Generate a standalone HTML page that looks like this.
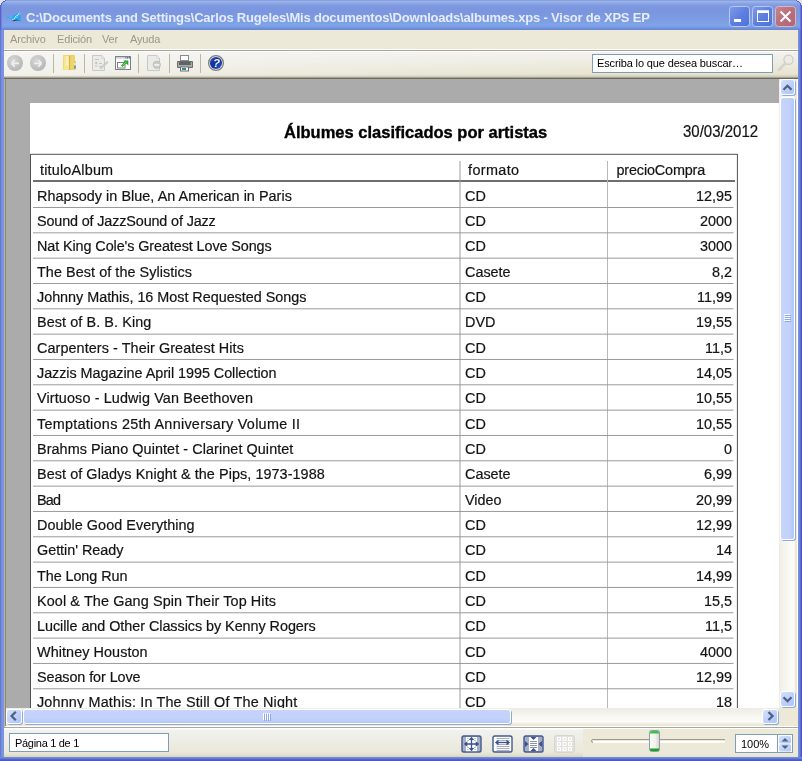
<!DOCTYPE html>
<html><head><meta charset="utf-8">
<style>
*{box-sizing:border-box}
html,body{margin:0;padding:0}
body{width:802px;height:761px;overflow:hidden;position:relative;background:#E4E4DC;font-family:"Liberation Sans",sans-serif}
.abs{position:absolute}
#win{position:absolute;left:0;top:0;width:802px;height:761px;overflow:hidden;background:#7A96DF;will-change:transform}
#title{position:absolute;left:0;top:0;width:802px;height:30px;
 background:linear-gradient(to bottom,#6C8BD8 0px,#9DB6EB 1px,#98B1E9 2px,#86A0E2 4px,#7C97DF 7px,#7A96DF 12px,#7C9CE3 20px,#80A5E7 25px,#789CE3 27px,#6D8AD8 29px,#6785D5 30px)}
#ttext{position:absolute;left:26px;top:9.5px;font-weight:bold;font-size:13px;letter-spacing:-0.2px;color:#E6ECFA;white-space:nowrap}
#lb{position:absolute;left:0;top:30px;width:4px;height:731px;background:linear-gradient(to right,#5A6ECB,#6E87DB 1px,#7A92E0 2px,#7C95E2 4px)}
#rb{position:absolute;left:798px;top:30px;width:4px;height:731px;background:linear-gradient(to right,#7490E0 0,#7490E0 1px,#6C84DA 1px,#6C84DA 2px,#5E6ECF 2px,#5E6ECF 3px,#4A50B5 3px)}
#bb{position:absolute;left:0;top:757px;width:802px;height:4px;background:linear-gradient(to bottom,#7591E1,#6B86DA 1px,#5A70CE 2px,#4A5BBB 3px)}
#menu{position:absolute;left:4px;top:30px;width:794px;height:19px;background:#ECE9D8}
.mi{position:absolute;top:3px;font-size:11px;color:#9C9887;white-space:nowrap;letter-spacing:-0.15px}
#mline{position:absolute;left:4px;top:49px;width:794px;height:3px;background:linear-gradient(to bottom,#fff 0,#fff 1px,#A8A595 1px,#A8A595 2px,#fff 2px)}
#tb{position:absolute;left:4px;top:52px;width:794px;height:27px;
 background:linear-gradient(to bottom,rgba(255,255,255,0),rgba(255,255,255,0) 100%) 0 0/100% 100% no-repeat,linear-gradient(to right,rgba(246,246,244,0.75),rgba(246,246,244,0) 75%) 0 0/100% 24px no-repeat,
 linear-gradient(to bottom,#F2F2F0 0,#EFEEE6 8px,#EBE8D8 16px,#E7E4D2 22px,#E2DECA 23px,#E2DECA 23.01px,#D2CEBA 24px,#D2CEBA 25px,#A6A394 25px,#A6A394 26px,#6B6A60 26px,#6B6A60 27px)}
.sep{position:absolute;top:54px;width:1px;height:19px;background:#BDB79E}
#doc{position:absolute;left:5px;top:79px;width:774px;height:629px;background:#ABABAB;overflow:hidden;border-left:1px solid #8A887C}
#page{position:absolute;left:24px;top:24px;width:749px;height:700px;background:#fff}
.t{position:absolute;font-size:14.4px;line-height:14.4px;color:#141414;white-space:nowrap;transform:scaleY(1.06);-webkit-text-stroke:0.2px #141414;transform-origin:0 12.2px}
.r{text-align:right}
#vs{position:absolute;left:779px;top:79px;width:19px;height:629px;background:linear-gradient(to right,#EDECE4 0,#F2F1EB 3px,#F7F7F2 8px,#FCFCF8 14px,#F6F5EE 15.5px,#ECEADB 16px,#ECEADB 18px,#fff 18px)}
#hs{position:absolute;left:5px;top:708px;width:774px;height:19px;background:linear-gradient(to bottom,#EEEDE6 0,#F1F0EA 4px,#F8F8F4 9px,#FBFBF8 14px,#F0EEE2 15.5px,#ECE9DA 16px,#ECE9DA 18px,#fff 18px,#fff 19px)}
#corner{position:absolute;left:779px;top:708px;width:19px;height:19px;background:linear-gradient(to bottom,#ECE9D8 0,#ECE9D8 18px,#fff 18px)}
.sbtn{position:absolute;border:1px solid #fff;border-radius:3px;background:linear-gradient(135deg,#D4E0FC,#B8CCF9 70%,#AEC4F7);box-shadow:1px 1px 0 #8EA8D8}
#status{position:absolute;left:4px;top:727px;width:794px;height:30px;background:linear-gradient(to bottom,#ACA899 0,#ACA899 1px,#fff 1px,#fff 2px,#F1F1EE 3px,#EEEDE5 14px,#EAE8DA 25px,#E2DFCB 28px,#D6D2BC 30px)}
.box{position:absolute;background:#fff;border:1px solid #7F9DB9}
.st{position:absolute;font-size:11px;color:#000;white-space:nowrap}
</style></head><body>
<div id="win">
 <div id="title">
  <svg class="abs" style="left:5px;top:9px" width="18" height="14" viewBox="0 0 18 14">
   <path d="M1.7 8.4 L9 6.2 L15 3.6 L16.2 12.4 L11.5 10.9 L7.4 11.6 L5.6 9.8 Z" fill="#26A8EA"/>
   <path d="M3.5 8.3 L9 6.5 L6 9.5 Z" fill="#4CB8F0"/>
   <path d="M7.6 11.2 L15 3.8" stroke="#D4F0FF" stroke-width="1.6" stroke-dasharray="1.1 0.9"/>
   <path d="M7.2 11.6 L11.5 10.6 L14.8 11.6 L11.5 11.4 L8 12.3 Z" fill="#2A3570"/>
  </svg>
  <div id="ttext">C:\Documents and Settings\Carlos Rugeles\Mis documentos\Downloads\albumes.xps - Visor de XPS EP</div>
  <!-- buttons -->
  <svg class="abs" style="left:729px;top:6px" width="68" height="22" viewBox="0 0 68 22">
   <defs>
    <linearGradient id="gb" x1="0" y1="0" x2="1" y2="1"><stop offset="0" stop-color="#7F9BEA"/><stop offset="0.5" stop-color="#5D7FE0"/><stop offset="1" stop-color="#4F72DA"/></linearGradient>
    <linearGradient id="gr" x1="0" y1="0" x2="1" y2="1"><stop offset="0" stop-color="#C58590"/><stop offset="0.5" stop-color="#BB6E7B"/><stop offset="1" stop-color="#B06674"/></linearGradient>
   </defs>
   <rect x="0.5" y="0.5" width="20" height="20" rx="3" fill="url(#gb)" stroke="#B8C8F0"/>
   <rect x="5" y="13" width="7" height="3" fill="#fff"/>
   <rect x="23.5" y="0.5" width="20" height="20" rx="3" fill="url(#gb)" stroke="#B8C8F0"/>
   <rect x="28.5" y="5" width="11" height="10.5" fill="none" stroke="#fff" stroke-width="1"/>
   <rect x="28" y="4.5" width="12" height="2.5" fill="#fff"/>
   <rect x="46.5" y="0.5" width="20" height="20" rx="3" fill="url(#gr)" stroke="#D8B8C0"/>
   <path d="M51.5 5.5 L61.5 15.5 M61.5 5.5 L51.5 15.5" stroke="#fff" stroke-width="2"/>
  </svg>
 </div>

 <svg class="abs" style="left:0;top:0" width="802" height="30" viewBox="0 0 802 30" shape-rendering="crispEdges">
  <rect x="0" y="5" width="1" height="25" fill="#5862D0"/>
  <rect x="1" y="5" width="1" height="25" fill="#7480DC"/>
  <rect x="801" y="5" width="1" height="25" fill="#5058C4"/>
  <rect x="800" y="5" width="1" height="25" fill="#6A74D4"/>
  <g fill="#E4E4DC">
   <rect x="0" y="0" width="5" height="1"/><rect x="0" y="1" width="3" height="1"/><rect x="0" y="2" width="2" height="1"/><rect x="0" y="3" width="1" height="2"/>
   <rect x="797" y="0" width="5" height="1"/><rect x="799" y="1" width="3" height="1"/><rect x="800" y="2" width="2" height="1"/><rect x="801" y="3" width="1" height="2"/>
  </g>
  <g fill="#4662D6">
   <rect x="5" y="0" width="1" height="1"/><rect x="3" y="1" width="2" height="1"/><rect x="2" y="2" width="1" height="1"/><rect x="1" y="3" width="1" height="2"/><rect x="0" y="5" width="1" height="1"/>
   <rect x="796" y="0" width="1" height="1"/><rect x="797" y="1" width="2" height="1"/><rect x="799" y="2" width="1" height="1"/><rect x="800" y="3" width="1" height="2"/><rect x="801" y="5" width="1" height="1"/>
  </g>
 </svg>
 <div id="lb"></div><div id="rb"></div><div id="bb"></div>
 <div id="menu">
  <div class="mi" style="left:6px">Archivo</div>
  <div class="mi" style="left:53px">Edición</div>
  <div class="mi" style="left:98px">Ver</div>
  <div class="mi" style="left:126px">Ayuda</div>
 </div>
 <div id="mline"></div>
 <div id="tb"></div>
 <!-- toolbar icons -->
 <svg class="abs" style="left:6px;top:54px" width="220" height="20" viewBox="0 0 220 20">
  <defs>
   <radialGradient id="gc" cx="0.4" cy="0.35" r="0.7"><stop offset="0" stop-color="#D8D8D8"/><stop offset="1" stop-color="#B4B4B4"/></radialGradient>
   <linearGradient id="fold" x1="0" y1="0" x2="1" y2="0"><stop offset="0" stop-color="#F6E28E"/><stop offset="1" stop-color="#E2B94A"/></linearGradient>
   <linearGradient id="help" x1="0" y1="0" x2="1" y2="1"><stop offset="0" stop-color="#2A4EC0"/><stop offset="0.5" stop-color="#0E2E98"/><stop offset="1" stop-color="#3A5ED0"/></linearGradient>
  </defs>
  <circle cx="9" cy="9" r="8" fill="url(#gc)"/>
  <path d="M5.5 9.3 H13 M5.5 9.3 L8.8 6 M5.5 9.3 L8.8 12.6" stroke="#EFEFEF" stroke-width="1.7" fill="none"/>
  <circle cx="32" cy="9" r="8" fill="url(#gc)"/>
  <path d="M28 9.3 H35.5 M35.5 9.3 L32.2 6 M35.5 9.3 L32.2 12.6" stroke="#EFEFEF" stroke-width="1.7" fill="none"/>
  <!-- folder -->
  <rect x="57" y="1" width="12" height="15" rx="1.2" fill="#E9CB5E"/>
  <rect x="57.5" y="1.5" width="6" height="14.5" rx="1" fill="#F6E78E"/>
  <rect x="60.5" y="2.5" width="1.2" height="9" fill="#FFFBE0"/>
  <rect x="63" y="2" width="1.2" height="14" fill="#D6B450"/>
  <rect x="64.2" y="1.5" width="4.5" height="14" fill="#EDD46E"/>
  <rect x="68" y="7" width="2" height="8.5" rx="0.8" fill="#E5C75A"/>
  <rect x="68.3" y="9" width="1.3" height="2.5" fill="#F4F8FF"/>
  <rect x="68.3" y="11.5" width="1.3" height="3" fill="#2C8ED8"/>
  <!-- disabled doc edit -->
  <path d="M86.5 1.5 H95.8 L98.5 4.2 V16.5 H86.5 Z" fill="#EBEBE8" stroke="#C8C8C4"/>
  <path d="M95.6 1.8 V4.4 H98.2" fill="#F6F6F4" stroke="#CFCFCB" stroke-width="0.8"/>
  <g stroke="#C4C4C0" stroke-width="1"><path d="M89 5.5 H93 M93 9.5 H96 M93 12.5 H95.5"/></g>
  <rect x="89.3" y="8" width="1.8" height="1.8" fill="#BCBCB8"/>
  <rect x="89.5" y="11.2" width="1.5" height="1.5" fill="none" stroke="#D0D0CC" stroke-width="0.6"/>
  <path d="M94.2 14.8 L101.8 7.8" stroke="#C6C6C2" stroke-width="2.2"/>
  <path d="M94.2 14.8 L101.8 7.8" stroke="#EEEEEA" stroke-width="0.7" stroke-dasharray="1 1"/>
  <!-- fullscreen -->
  <rect x="109.5" y="2.5" width="15" height="13" fill="#fff" stroke="#7C8086"/>
  <rect x="110" y="3.2" width="9.5" height="1.4" fill="#C4C8D4"/>
  <rect x="119.3" y="3.2" width="1.3" height="1.3" fill="#3A5090"/><rect x="121" y="3.2" width="1.3" height="1.3" fill="#3A5090"/><rect x="122.7" y="3.2" width="1.3" height="1.3" fill="#3A5090"/>
  <rect x="111.5" y="8.5" width="7.5" height="5.5" fill="#fff" stroke="#7C8086"/>
  <path d="M115.8 12.2 L120.8 7.2" stroke="#22A022" stroke-width="2.3"/>
  <path d="M117.2 6.4 H122.3 V11.6 Z" fill="#22A022"/>
  <path d="M116.6 11.6 L120.6 7.6" stroke="#9AF09A" stroke-width="0.8"/>
  <!-- disabled doc -->
  <path d="M141.5 1.5 H150.8 L153.5 4.2 V16.5 H141.5 Z" fill="#EBEBE8" stroke="#C8C8C4"/>
  <path d="M150.6 1.8 V4.4 H153.2" fill="#F6F6F4" stroke="#CFCFCB" stroke-width="0.8"/>
  <circle cx="150.8" cy="10.8" r="3.6" fill="#CDCDC9" stroke="#B8B8B4" stroke-width="0.9"/>
  <rect x="148.3" y="10" width="5" height="1.7" fill="#F2F2F0"/>
  <!-- printer -->
  <rect x="174.5" y="1.5" width="8" height="5" fill="#fff" stroke="#8A8A8A"/>
  <path d="M171.5 7.5 H186.5 V13.5 H171.5 Z" fill="#A8AAAC" stroke="#6A6C6E"/>
  <rect x="173" y="8" width="12" height="3" fill="#606264"/>
  <rect x="174.5" y="13" width="8" height="4" fill="#fff" stroke="#6A6C6E"/>
  <rect x="176" y="14" width="2" height="2" fill="#3A7AC8"/><rect x="178" y="14" width="2" height="2" fill="#2A9A5A"/>
  <circle cx="185" cy="9.5" r="0.8" fill="#58C858"/>
  <!-- help -->
  <circle cx="210" cy="9" r="7.4" fill="#EEEEEE" stroke="#7E7E7E" stroke-width="1.3"/>
  <circle cx="210" cy="9" r="6.1" fill="url(#help)"/>
  <text x="210.5" y="13.3" font-family="Liberation Sans" font-weight="bold" font-style="italic" font-size="11.5" fill="#F4F4F8" text-anchor="middle">?</text>
 </svg>
 <div class="sep" style="left:53px"></div>
 <div class="sep" style="left:84px"></div>
 <div class="sep" style="left:138px"></div>
 <div class="sep" style="left:169px"></div>
 <div class="sep" style="left:200px"></div>
 <div class="box" style="left:592px;top:54px;width:181px;height:19px"></div>
 <div class="st" style="left:597px;top:57px;letter-spacing:-0.14px">Escriba lo que desea buscar…</div>
 <svg class="abs" style="left:777px;top:53px" width="21" height="21" viewBox="0 0 21 21">
  <circle cx="11.5" cy="6.8" r="4.6" fill="#ECEBE4" stroke="#CFCEC6" stroke-width="1.3"/>
  <path d="M8.2 10.3 L1.8 16.8" stroke="#CFCEC6" stroke-width="2.4" stroke-linecap="round"/>
  <path d="M8.2 10.3 L1.8 16.8" stroke="#EEEEE8" stroke-width="0.8" stroke-dasharray="1 1"/>
 </svg>

 <div class="abs" style="left:4px;top:79px;width:1px;height:648px;background:#BCB6A0"></div>
 <div id="doc">
  <div id="page">
   <div class="abs" style="left:254px;top:20.50px;font-weight:bold;font-size:16.5px;line-height:16.5px;color:#000;white-space:nowrap;-webkit-text-stroke:0.35px #000">Álbumes clasificados por artistas</div>
   <div class="t" style="left:653px;top:22px;font-size:15px">30/03/2012</div>
   <svg class="abs" style="left:0;top:0" width="749" height="700" viewBox="0 0 749 700">
    <g stroke="#505050" stroke-width="1" fill="none">
     <line x1="0.5" y1="51.3" x2="707.5" y2="51.3"/>
     <line x1="0.5" y1="51" x2="0.5" y2="700"/>
     <line x1="707.4" y1="51" x2="707.4" y2="700"/>
    </g>
    <line x1="3" y1="78" x2="705" y2="78" stroke="#6E6E6E" stroke-width="2"/>
    <g stroke="#B8B8B8" stroke-width="1">
     <line x1="430" y1="58" x2="430" y2="700" stroke="#9C9C9C"/>
     <line x1="577.5" y1="58" x2="577.5" y2="700"/>
    </g>
    <g stroke="#9A9A9A" stroke-width="1" shape-rendering="geometricPrecision">
<line x1="3" y1="104.50" x2="703.5" y2="104.50" />
<line x1="3" y1="129.83" x2="703.5" y2="129.83" />
<line x1="3" y1="155.16" x2="703.5" y2="155.16" />
<line x1="3" y1="180.49" x2="703.5" y2="180.49" />
<line x1="3" y1="205.82" x2="703.5" y2="205.82" />
<line x1="3" y1="231.15" x2="703.5" y2="231.15" />
<line x1="3" y1="256.48" x2="703.5" y2="256.48" />
<line x1="3" y1="281.81" x2="703.5" y2="281.81" />
<line x1="3" y1="307.14" x2="703.5" y2="307.14" />
<line x1="3" y1="332.47" x2="703.5" y2="332.47" />
<line x1="3" y1="357.80" x2="703.5" y2="357.80" />
<line x1="3" y1="383.13" x2="703.5" y2="383.13" />
<line x1="3" y1="408.46" x2="703.5" y2="408.46" />
<line x1="3" y1="433.79" x2="703.5" y2="433.79" />
<line x1="3" y1="459.12" x2="703.5" y2="459.12" />
<line x1="3" y1="484.45" x2="703.5" y2="484.45" />
<line x1="3" y1="509.78" x2="703.5" y2="509.78" />
<line x1="3" y1="535.11" x2="703.5" y2="535.11" />
<line x1="3" y1="560.44" x2="703.5" y2="560.44" />
<line x1="3" y1="585.77" x2="703.5" y2="585.77" />
<line x1="3" y1="611.10" x2="703.5" y2="611.10" />
    </g>
   </svg>
   <div class="t" style="left:10px;top:59.50px;letter-spacing:0.19px">tituloAlbum</div>
   <div class="t" style="left:438px;top:59.50px;letter-spacing:0.38px">formato</div>
   <div class="t" style="left:586.5px;top:59.50px;letter-spacing:-0.15px">precioCompra</div>
<div class="t" style="left:7px;top:85.70px;letter-spacing:0.035px">Rhapsody in Blue, An American in Paris</div>
<div class="t" style="left:435px;top:85.70px">CD</div>
<div class="t r" style="right:47px;top:85.70px">12,95</div>
<div class="t" style="left:7px;top:111.03px;letter-spacing:-0.144px">Sound of JazzSound of Jazz</div>
<div class="t" style="left:435px;top:111.03px">CD</div>
<div class="t r" style="right:47px;top:111.03px">2000</div>
<div class="t" style="left:7px;top:136.36px;letter-spacing:-0.094px">Nat King Cole's Greatest Love Songs</div>
<div class="t" style="left:435px;top:136.36px">CD</div>
<div class="t r" style="right:47px;top:136.36px">3000</div>
<div class="t" style="left:7px;top:161.69px;letter-spacing:0.062px">The Best of the Sylistics</div>
<div class="t" style="left:435px;top:161.69px">Casete</div>
<div class="t r" style="right:47px;top:161.69px">8,2</div>
<div class="t" style="left:7px;top:187.02px;letter-spacing:-0.027px">Johnny Mathis, 16 Most Requested Songs</div>
<div class="t" style="left:435px;top:187.02px">CD</div>
<div class="t r" style="right:47px;top:187.02px">11,99</div>
<div class="t" style="left:7px;top:212.35px;letter-spacing:0.088px">Best of B. B. King</div>
<div class="t" style="left:435px;top:212.35px">DVD</div>
<div class="t r" style="right:47px;top:212.35px">19,55</div>
<div class="t" style="left:7px;top:237.68px;letter-spacing:0.077px">Carpenters - Their Greatest Hits</div>
<div class="t" style="left:435px;top:237.68px">CD</div>
<div class="t r" style="right:47px;top:237.68px">11,5</div>
<div class="t" style="left:7px;top:263.01px;letter-spacing:-0.058px">Jazzis Magazine April 1995 Collection</div>
<div class="t" style="left:435px;top:263.01px">CD</div>
<div class="t r" style="right:47px;top:263.01px">14,05</div>
<div class="t" style="left:7px;top:288.34px;letter-spacing:0.123px">Virtuoso - Ludwig Van Beethoven</div>
<div class="t" style="left:435px;top:288.34px">CD</div>
<div class="t r" style="right:47px;top:288.34px">10,55</div>
<div class="t" style="left:7px;top:313.67px;letter-spacing:0.276px">Temptations 25th Anniversary Volume II</div>
<div class="t" style="left:435px;top:313.67px">CD</div>
<div class="t r" style="right:47px;top:313.67px">10,55</div>
<div class="t" style="left:7px;top:339.00px;letter-spacing:0.074px">Brahms Piano Quintet - Clarinet Quintet</div>
<div class="t" style="left:435px;top:339.00px">CD</div>
<div class="t r" style="right:47px;top:339.00px">0</div>
<div class="t" style="left:7px;top:364.33px;letter-spacing:0.071px">Best of Gladys Knight &amp; the Pips, 1973-1988</div>
<div class="t" style="left:435px;top:364.33px">Casete</div>
<div class="t r" style="right:47px;top:364.33px">6,99</div>
<div class="t" style="left:7px;top:389.66px;letter-spacing:-0.750px">Bad</div>
<div class="t" style="left:435px;top:389.66px">Video</div>
<div class="t r" style="right:47px;top:389.66px">20,99</div>
<div class="t" style="left:7px;top:414.99px;letter-spacing:0.038px">Double Good Everything</div>
<div class="t" style="left:435px;top:414.99px">CD</div>
<div class="t r" style="right:47px;top:414.99px">12,99</div>
<div class="t" style="left:7px;top:440.32px;letter-spacing:-0.033px">Gettin' Ready</div>
<div class="t" style="left:435px;top:440.32px">CD</div>
<div class="t r" style="right:47px;top:440.32px">14</div>
<div class="t" style="left:7px;top:465.65px;letter-spacing:-0.073px">The Long Run</div>
<div class="t" style="left:435px;top:465.65px">CD</div>
<div class="t r" style="right:47px;top:465.65px">14,99</div>
<div class="t" style="left:7px;top:490.98px;letter-spacing:0.112px">Kool &amp; The Gang Spin Their Top Hits</div>
<div class="t" style="left:435px;top:490.98px">CD</div>
<div class="t r" style="right:47px;top:490.98px">15,5</div>
<div class="t" style="left:7px;top:516.31px;letter-spacing:-0.049px">Lucille and Other Classics by Kenny Rogers</div>
<div class="t" style="left:435px;top:516.31px">CD</div>
<div class="t r" style="right:47px;top:516.31px">11,5</div>
<div class="t" style="left:7px;top:541.64px;letter-spacing:0.071px">Whitney Houston</div>
<div class="t" style="left:435px;top:541.64px">CD</div>
<div class="t r" style="right:47px;top:541.64px">4000</div>
<div class="t" style="left:7px;top:566.97px;letter-spacing:-0.086px">Season for Love</div>
<div class="t" style="left:435px;top:566.97px">CD</div>
<div class="t r" style="right:47px;top:566.97px">12,99</div>
<div class="t" style="left:7px;top:592.30px;letter-spacing:0.164px">Johnny Mathis: In The Still Of The Night</div>
<div class="t" style="left:435px;top:592.30px">CD</div>
<div class="t r" style="right:47px;top:592.30px">18</div>
  </div>
 </div>
 <div id="vs"></div>
 <div class="sbtn" style="left:780px;top:79px;width:15px;height:16px"></div>
 <div class="sbtn" style="left:780px;top:97px;width:15px;height:443px;background:linear-gradient(to right,#C6D3FA,#C4D2FB 60%,#B2C8F8)"></div>
 <div class="sbtn" style="left:780px;top:691px;width:15px;height:16px"></div>
 <div id="hs"></div>
 <div class="abs" style="left:5px;top:708px;width:1px;height:18px;background:#8A887C"></div>
 <div id="corner"></div>
 <div class="sbtn" style="left:6px;top:709px;width:16px;height:15px"></div>
 <div class="sbtn" style="left:23px;top:709px;width:488px;height:15px;background:linear-gradient(to bottom,#C6D3FA,#C4D2FB 60%,#B2C8F8)"></div>
 <div class="sbtn" style="left:762px;top:709px;width:16px;height:15px"></div>
 <svg class="abs" style="left:0;top:0;pointer-events:none" width="802" height="761" viewBox="0 0 802 761">
  <g stroke="#4D6185" stroke-width="2.3" fill="none">
   <path d="M783.5 89.8 L787.5 85.8 L791.5 89.8"/>
   <path d="M783.5 697.2 L787.5 701.2 L791.5 697.2"/>
   <path d="M15.8 711.8 L11.6 716 L15.8 720.2"/>
   <path d="M768.5 712 L772.5 716 L768.5 720"/>
  </g>
  <g stroke="#fff" stroke-width="1">
   <path d="M263.5 713 V720 M265.5 713 V720 M267.5 713 V720 M269.5 713 V720"/>
   <path d="M784 314.5 H790 M784 316.5 H790 M784 318.5 H790 M784 320.5 H790"/>
  </g>
  <g stroke="#8BA8E8" stroke-width="1">
   <path d="M264.5 714 V721 M266.5 714 V721 M268.5 714 V721 M270.5 714 V721"/>
   <path d="M785 315.5 H791 M785 317.5 H791 M785 319.5 H791 M785 321.5 H791"/>
  </g>
 </svg>
 <div id="status"></div>
 <div class="box" style="left:9px;top:733px;width:160px;height:19px"></div>
 <div class="st" style="left:15px;top:737px;letter-spacing:-0.3px">Página 1 de 1</div>
 <div class="abs" style="left:583px;top:729px;width:215px;height:28px;background:linear-gradient(to bottom,#ECE9D8 0,#ECE9D8 25px,#E6E3D0 28px)"></div>
 <div class="box" style="left:735px;top:734px;width:58px;height:19px"></div>
 <div class="st" style="left:741px;top:738px">100%</div>
 <svg class="abs" style="left:0;top:0;pointer-events:none" width="802" height="761" viewBox="0 0 802 761">
  <defs>
   <linearGradient id="spin" x1="0" y1="0" x2="1" y2="1"><stop offset="0" stop-color="#D6E2FC"/><stop offset="1" stop-color="#B0C6F6"/></linearGradient>
   <linearGradient id="thumb" x1="0" y1="0" x2="1" y2="0"><stop offset="0" stop-color="#FBFBF8"/><stop offset="0.6" stop-color="#F2F1EB"/><stop offset="1" stop-color="#D4D2C8"/></linearGradient>
  </defs>
  <!-- icon 1 -->
  <rect x="462" y="736" width="19" height="16" rx="1.8" fill="#A9AFC3" stroke="#44598F" stroke-width="1.4"/>
  <rect x="466" y="737" width="11" height="14.2" fill="#fff"/>
  <g stroke="#C4C8D4" stroke-width="1"><path d="M467 738.5 H469 M474 738.5 H476 M467 740.5 H469 M474 740.5 H476 M467 747.5 H469 M474 747.5 H476 M467 749.5 H469 M474 749.5 H476"/></g>
  <g stroke="#3A5090" stroke-width="1.6" fill="none">
   <path d="M471.5 739 V749 M466 744 H477" stroke-width="1.3"/>
  </g>
  <g fill="#3A5090">
   <path d="M471.5 736.8 L468.8 740 H474.2 Z"/><path d="M471.5 751.2 L468.8 748 H474.2 Z"/>
   <path d="M463.8 744 L467.3 741.3 V746.7 Z"/><path d="M479.2 744 L475.7 741.3 V746.7 Z"/>
  </g>
  <!-- icon 2 -->
  <rect x="493" y="736" width="19" height="16" rx="1.8" fill="#fff" stroke="#44598F" stroke-width="1.4"/>
  <g stroke="#A8AEC0" stroke-width="1"><path d="M496.5 738.5 H509.5 M496.5 740.5 H509.5 M496.5 744.5 H509.5 M496.5 746.5 H509.5 M496.5 748.5 H509.5 M496.5 750.5 H509.5"/></g>
  <path d="M497 742.5 H508" stroke="#3A5090" stroke-width="1.3"/>
  <g fill="#3A5090"><path d="M494.8 742.5 L498.5 739.8 V745.2 Z"/><path d="M510.2 742.5 L506.5 739.8 V745.2 Z"/></g>
  <!-- icon 3 -->
  <rect x="524" y="736" width="19" height="16" rx="1.8" fill="#A9AFC3" stroke="#44598F" stroke-width="1.4"/>
  <rect x="529" y="737" width="9" height="14" fill="#fff"/>
  <g stroke="#8E94A8" stroke-width="1"><path d="M530 741.5 H537 M530 743.5 H537 M530 745.5 H537 M530 747.5 H537"/></g>
  <g fill="#3A5090">
   <path d="M530.5 737 H536.5 L533.5 740 Z"/><path d="M530.5 751 H536.5 L533.5 748 Z"/>
   <path d="M525 741 V747 L528.5 744 Z"/><path d="M542 741 V747 L538.5 744 Z"/>
  </g>
  <!-- icon 4 disabled -->
  <rect x="554.5" y="735.5" width="20" height="17" rx="2" fill="#E2E1DC" stroke="#D6D5D0"/>
  <g fill="#fff">
   <rect x="557" y="737" width="4" height="4"/><rect x="562.5" y="737" width="4" height="4"/><rect x="568" y="737" width="4" height="4"/>
   <rect x="557" y="742" width="4" height="4"/><rect x="562.5" y="742" width="4" height="4"/><rect x="568" y="742" width="4" height="4"/>
   <rect x="557" y="747" width="4" height="4"/><rect x="562.5" y="747" width="4" height="4"/><rect x="568" y="747" width="4" height="4"/>
  </g>
  <g fill="#DCDBD6">
   <rect x="558.2" y="738.2" width="1.6" height="1.6"/><rect x="563.7" y="738.2" width="1.6" height="1.6"/><rect x="569.2" y="738.2" width="1.6" height="1.6"/>
   <rect x="558.2" y="743.2" width="1.6" height="1.6"/><rect x="563.7" y="743.2" width="1.6" height="1.6"/><rect x="569.2" y="743.2" width="1.6" height="1.6"/>
   <rect x="558.2" y="748.2" width="1.6" height="1.6"/><rect x="563.7" y="748.2" width="1.6" height="1.6"/><rect x="569.2" y="748.2" width="1.6" height="1.6"/>
  </g>
  <!-- slider track -->
  <path d="M725 739.5 H593 Q591.5 739.5 591.5 741 Q591.5 742.5 593 742.5" fill="none" stroke="#9E9B8A" stroke-width="1"/>
  <rect x="593" y="741" width="132" height="1.8" fill="#FFFFFF"/>
  <!-- slider thumb -->
  <rect x="649.5" y="730.5" width="10" height="21" rx="2" fill="url(#thumb)" stroke="#8D9CB2"/>
  <path d="M650 733 V732.5 Q650 731 651.5 731 H657.5 Q659 731 659 732.5 V733.5 H650 Z" fill="#3CC43C"/>
  <path d="M650 748.5 H659 V749.5 Q659 751 657.5 751 H651.5 Q650 751 650 749.5 Z" fill="#14A814"/>
  <!-- spinner -->
  <rect x="777" y="735" width="1" height="17" fill="#7F9DB9"/>
  <rect x="779" y="736" width="12" height="7.5" rx="1.5" fill="url(#spin)"/>
  <rect x="779" y="744" width="12" height="7.5" rx="1.5" fill="url(#spin)"/>
  <path d="M781.5 741.5 L785 738 L788.5 741.5 Z" fill="#4D6185"/>
  <path d="M781.5 745.5 L785 749 L788.5 745.5 Z" fill="#4D6185"/>
 </svg>
</div>
</body></html>
